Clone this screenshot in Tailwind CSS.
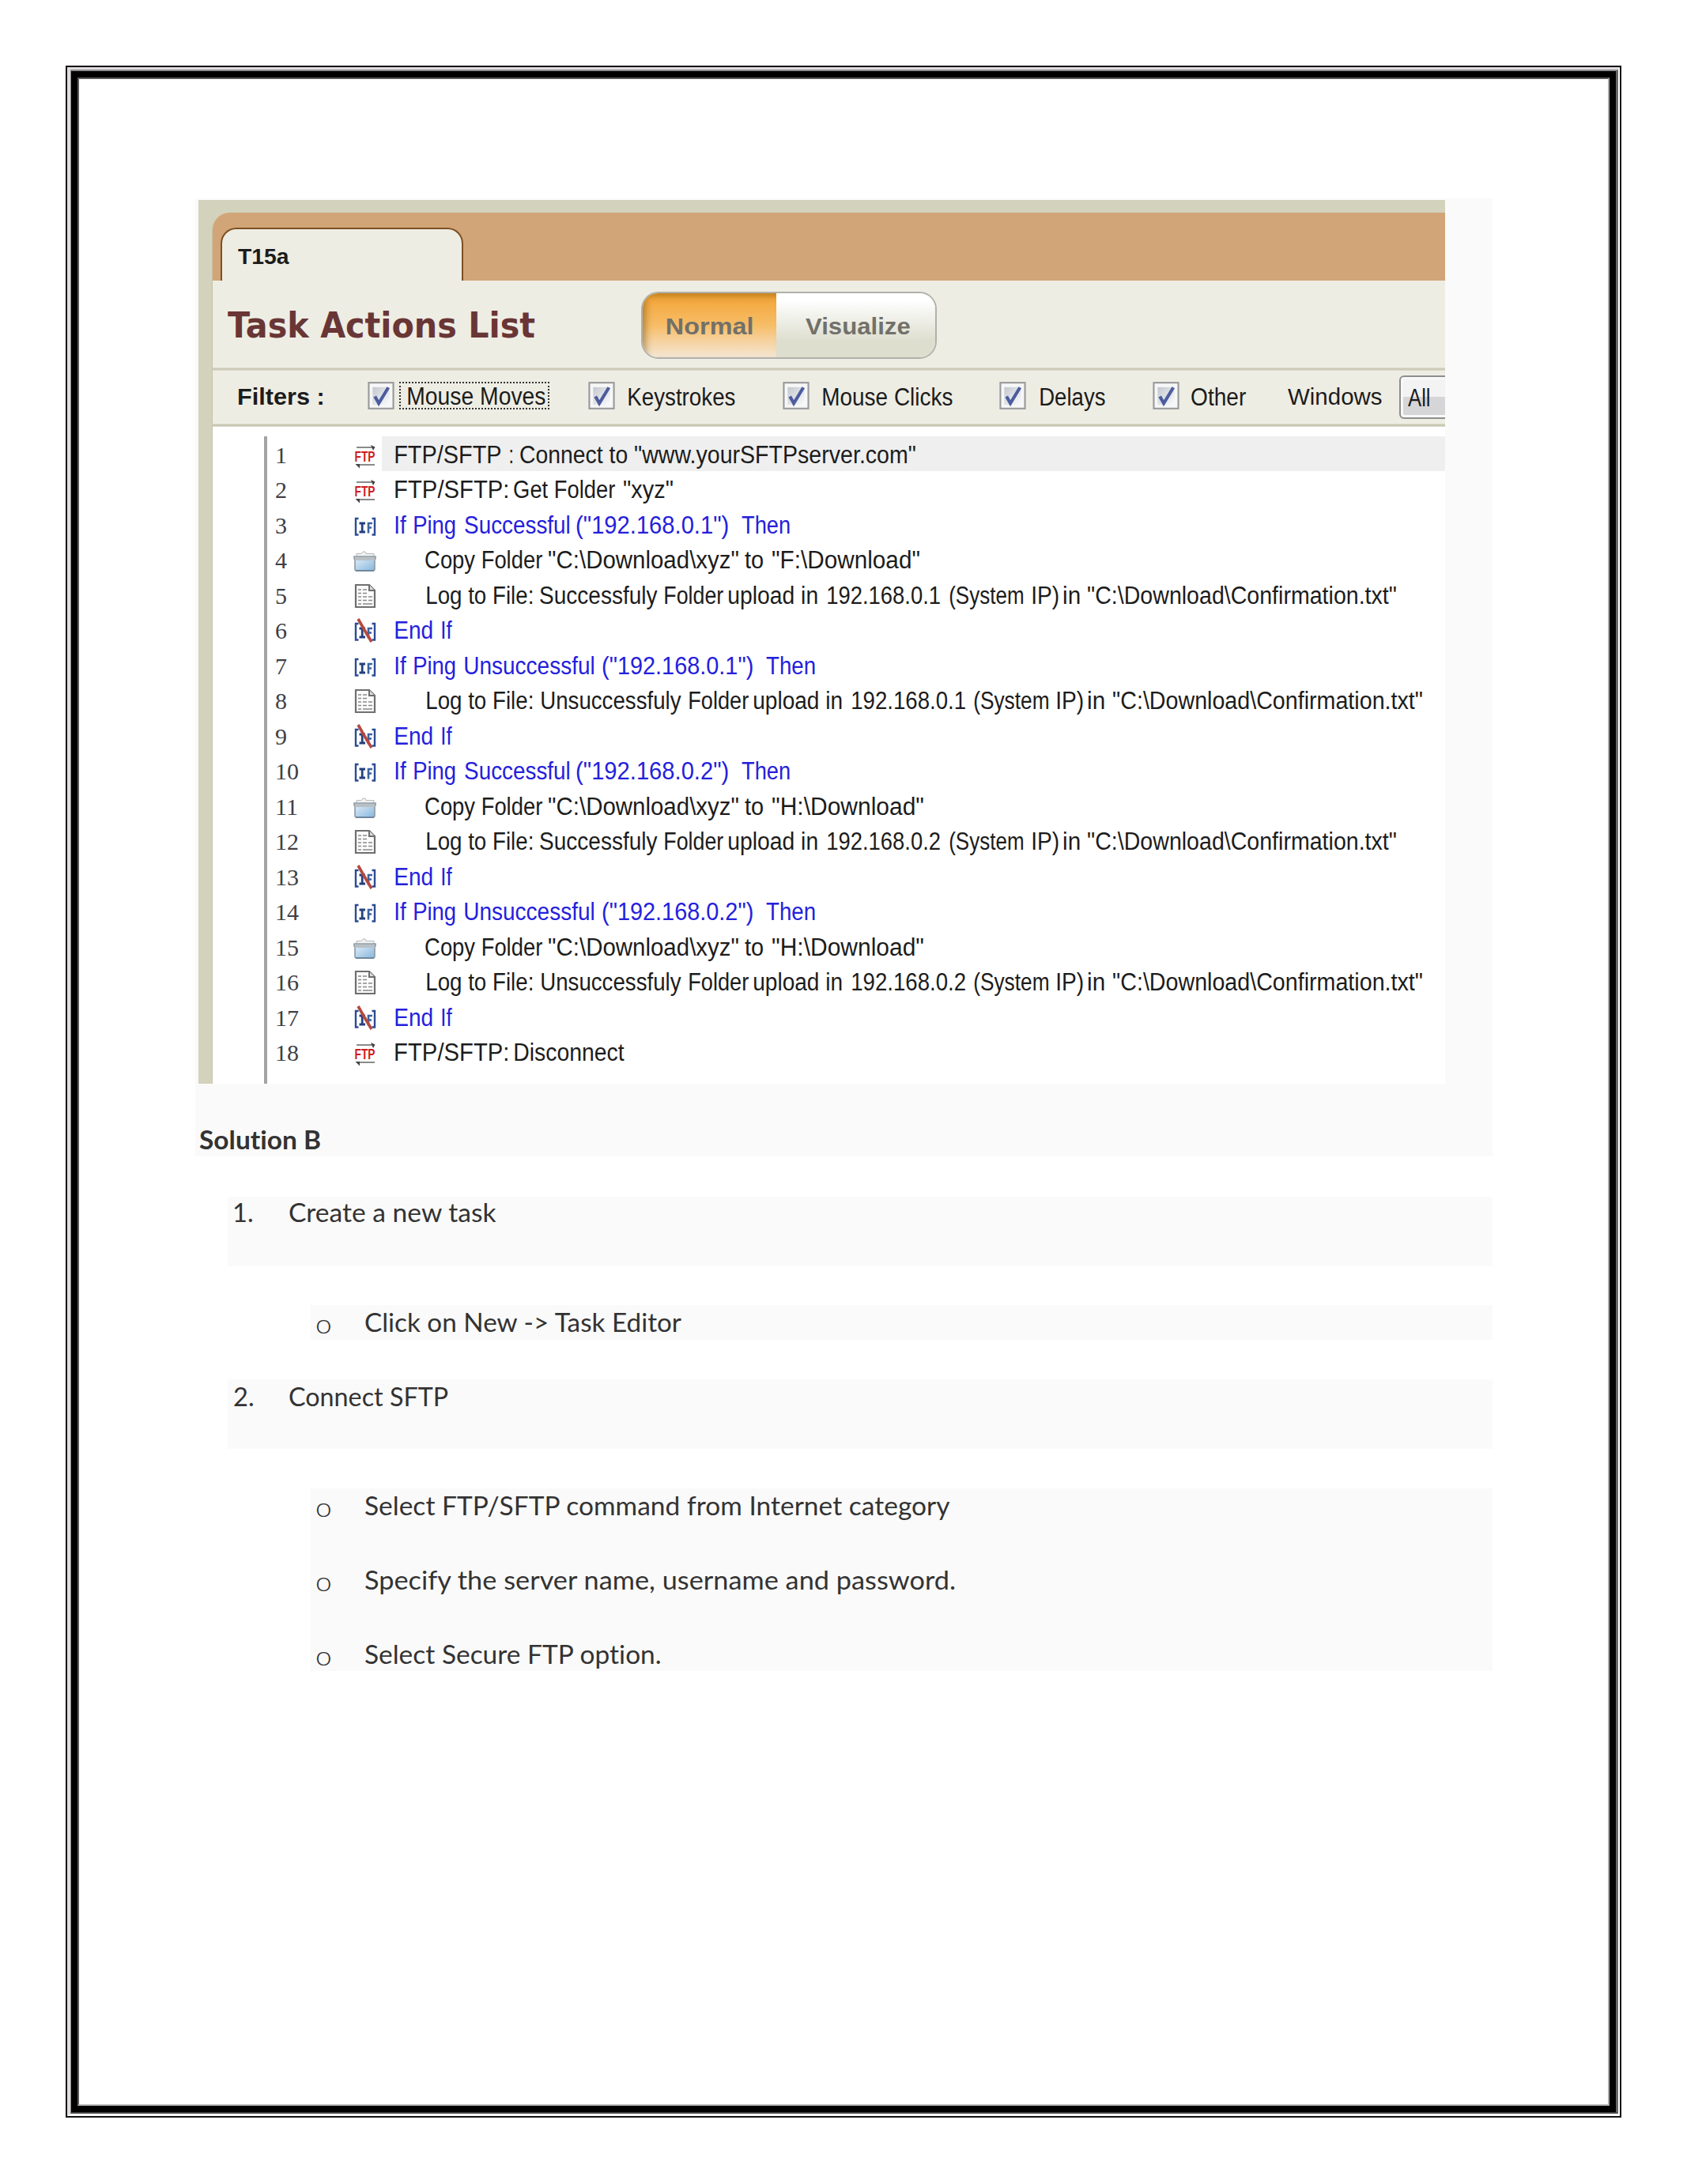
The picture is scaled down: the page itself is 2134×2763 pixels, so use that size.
<!DOCTYPE html>
<html lang="en">
<head>
<meta charset="utf-8">
<title>Solution B</title>
<script src="https://cdn.jsdelivr.net/npm/@tailwindcss/browser@4"></script>
</head>
<body class="bg-white">
<svg class="absolute size-0">
  <defs>
    <linearGradient id="g-folder" x1="0" y1="0" x2="1" y2="1"><stop offset="0" stop-color="#e6f3fb"/><stop offset="1" stop-color="#86b4dc"/></linearGradient>
    <linearGradient id="g-check" x1="0" y1="0" x2="1" y2="1"><stop offset="0" stop-color="#c3c8cf"/><stop offset="1" stop-color="#fafbfd"/></linearGradient>
  </defs>
</svg>

<!-- page frame -->
<div class="pt-[83px] pl-[83px]">
<div class="h-[2596px] w-[1968px] border-2 border-[#141214]">
<div class="h-full border-t-3 border-r-2 border-b-3 border-l-4 border-t-[#e0dcdf] border-r-white border-b-white border-l-[#e0dcdf]">
<div class="h-full border-t-2 border-r-3 border-b-2 border-l border-t-[#8d8a8c] border-r-[#666] border-b-[#444] border-l-[#8d8a8c]">
<div class="h-full border-8 border-black">
<div class="flex h-full flex-col border-2 border-t-[#5a5a5a] border-r-[#aaa] border-b-[#bbb] border-l-[#5a5a5a] bg-white font-['Lato',sans-serif] text-[32px] tracking-[0.01px] text-[#333]">

  <section class="mt-[151px] ml-[147px] h-[1212px] w-[1641px] shrink-0 bg-[#fafafa] pt-[2px] pl-[4px]">
    <div class="h-[1118px] w-[1577px] overflow-hidden bg-[#d3d2bd] pt-4 pl-[17px] font-['Liberation_Sans',sans-serif] text-[31px] text-[#1c1c1c]">
      <div class="flex h-full flex-col overflow-hidden rounded-tl-[22px] border-l border-[#c6c4a6] bg-[#eeede4]">
        <div class="flex h-[86px] shrink-0 bg-[#d1a577] pt-[19px] pl-[10px]">
          <div class="h-[67px] w-[307px] rounded-t-[20px] border-2 border-b-0 border-[#7d5022] bg-[#eeede4] pt-[13px] pl-[20px] text-[28px] leading-[44px] font-bold">
            <span data-w="65" class="block origin-left whitespace-nowrap">T15a</span>
          </div>
        </div>
        <div class="flex h-[110px] shrink-0 pl-[19px]">
          <h1 data-w="389" class="mt-[2px] block shrink-0 origin-left font-['DejaVu_Sans',sans-serif] text-[44px] leading-[110px] font-bold whitespace-nowrap text-[#693635]">Task Actions List</h1>
          <div class="mt-[14px] ml-[134px] flex h-[85px] w-[374px] shrink-0 overflow-hidden rounded-[22px] border-2 border-[#b1b1ab] text-[30px] leading-[83px] font-bold text-[#72706a]">
            <div class="flex w-[169px] shrink-0 bg-linear-to-b from-[#f2a22f] via-[#f7bd66] to-[#f3e6d2] pl-[31px] shadow-[inset_6px_5px_8px_-2px_rgba(120,80,10,0.5)]">
              <span data-w="108" class="block origin-left whitespace-nowrap">Normal</span>
            </div>
            <div class="flex flex-1 bg-linear-to-b from-white from-10% to-[#dddece] to-75% pl-[37px]">
              <span data-w="132" class="block origin-left whitespace-nowrap">Visualize</span>
            </div>
          </div>
        </div>
        <div class="h-1 shrink-0 border-y border-[#dad9c9] bg-[#cccbb9]"></div>
        <div class="flex h-[67px] shrink-0 leading-[67px]">
          <span data-w="107" class="ml-[32px] block shrink-0 origin-left text-[29px] font-bold whitespace-nowrap">Filters :</span>
          <svg data-icon="check" viewBox="0 0 34 36" class="mt-[14px] ml-[57px] h-[35px] w-[34px] shrink-0"></svg>
          <div class="mt-[14px] ml-[6px] flex h-[35px] w-[190px] shrink-0 border-2 border-dotted border-[#333] pl-[9px] leading-[34px]">
            <span data-w="174" class="block origin-left whitespace-nowrap">Mouse Moves</span>
          </div>
          <svg data-icon="check" viewBox="0 0 34 36" class="mt-[14px] ml-[49px] h-[35px] w-[34px] shrink-0"></svg>
          <span data-w="135" class="ml-[17px] block shrink-0 origin-left whitespace-nowrap">Keystrokes</span>
          <svg data-icon="check" viewBox="0 0 34 36" class="mt-[14px] ml-[60px] h-[35px] w-[34px] shrink-0"></svg>
          <span data-w="164" class="ml-[17px] block shrink-0 origin-left whitespace-nowrap">Mouse Clicks</span>
          <svg data-icon="check" viewBox="0 0 34 36" class="mt-[14px] ml-[59px] h-[35px] w-[34px] shrink-0"></svg>
          <span data-w="82" class="ml-[18px] block shrink-0 origin-left whitespace-nowrap">Delays</span>
          <svg data-icon="check" viewBox="0 0 34 36" class="mt-[14px] ml-[60px] h-[35px] w-[34px] shrink-0"></svg>
          <span data-w="69" class="ml-[15px] block shrink-0 origin-left whitespace-nowrap">Other</span>
          <span data-w="119" class="ml-[53px] block shrink-0 origin-left text-[29px] whitespace-nowrap">Windows</span>
          <div class="mt-[6px] ml-[22px] flex h-[55px] w-[90px] shrink-0 rounded-[6px] border-2 border-[#8e8e8e] bg-linear-to-b from-[#f3f3f3] from-50% to-[#d6d6d8] to-50% pl-[9px] leading-[54px] shadow-[inset_0_0_0_3px_#f8f8f8]">
            <span data-w="27" class="block origin-left whitespace-nowrap">All</span>
          </div>
        </div>
        <div class="h-1 shrink-0 border-y border-[#dad9c9] bg-[#c9c8b4]"></div>
        <div class="flex-1 bg-white pt-[12px] pl-[65px]">
          <div id="actions" class="h-full border-l-4 border-[#a3a3a3]"></div>
        </div>
      </div>
    </div>
    <h2 data-w="153" class="mt-[49px] ml-[1px] block origin-left leading-[44px] font-bold whitespace-nowrap">Solution B</h2>
  </section>

  <div class="mt-[51px] ml-[188px] flex h-[88px] w-[1600px] shrink-0 bg-[#fafafa] pl-[8px] leading-[39px]">
    <span data-w="23" class="block shrink-0 origin-left">1.</span>
    <span data-w="263" class="ml-[47px] block origin-left whitespace-nowrap">Create a new task</span>
  </div>

  <div class="mt-[49px] ml-[293px] flex h-[44px] w-[1495px] shrink-0 bg-[#fafafa] pl-[7px] leading-[44px]">
    <span data-w="18" class="block shrink-0 origin-left text-[33px] leading-[46px] font-light">o</span>
    <span data-w="402" class="ml-[44px] block origin-left whitespace-nowrap">Click on New -&gt; Task Editor</span>
  </div>

  <div class="mt-[50px] ml-[188px] flex h-[88px] w-[1600px] shrink-0 bg-[#fafafa] pl-[8px] leading-[44px]">
    <span data-w="24" class="block shrink-0 origin-left">2.</span>
    <span data-w="201" class="ml-[46px] block origin-left whitespace-nowrap">Connect SFTP</span>
  </div>

  <div class="mt-[50px] ml-[293px] flex h-[231px] w-[1495px] shrink-0 flex-col gap-[48px] bg-[#fafafa] pl-[7px] leading-[44px]">
    <div class="flex h-[46px]">
      <span data-w="18" class="block shrink-0 origin-left text-[33px] leading-[46px] font-light">o</span>
      <span data-w="741" class="ml-[44px] block origin-left whitespace-nowrap">Select FTP/SFTP command from Internet category</span>
    </div>
    <div class="flex h-[46px]">
      <span data-w="18" class="block shrink-0 origin-left text-[33px] leading-[46px] font-light">o</span>
      <span data-w="747" class="ml-[44px] block origin-left whitespace-nowrap">Specify the server name, username and password.</span>
    </div>
    <div class="flex h-[46px]">
      <span data-w="18" class="block shrink-0 origin-left text-[33px] leading-[46px] font-light">o</span>
      <span data-w="374" class="ml-[44px] block origin-left whitespace-nowrap">Select Secure FTP option.</span>
    </div>
  </div>

</div></div></div></div></div></div>

<script>
  const ifMark = `<path d="M6.500 7H3v20.500h3.500M23.500 7H27v20.500h-3.500" fill="none" stroke="#2c4b94" stroke-width="2.400"/>
    <path d="M7.500 13h7.500M11.200 13v11M7.500 24h7.500" fill="none" stroke="#23407f" stroke-width="2.800"/>
    <path d="M19 25.500V13h5M19 18.500h4" fill="none" stroke="#3c62a0" stroke-width="2.600"/>`;
  const icons = {
    ftp: `<path d="M4 6H24" stroke="#8a8a8a" stroke-width="2"/><path d="M22 3l5.500 2.500L25 10z" fill="#444"/>
      <text x="1.500" y="23.500" font-family="Liberation Sans" font-weight="700" font-size="18" textLength="26" lengthAdjust="spacingAndGlyphs" fill="#cf1c1c">FTP</text>
      <path d="M4 28H27" stroke="#8a8a8a" stroke-width="2"/><path d="M2.500 27h5.500v5.500z" fill="#444"/>`,
    if: ifMark,
    endif: ifMark + `<path d="M6 1l8 14 9 15" fill="none" stroke="#b5493f" stroke-width="3.600"/>`,
    folder: `<path d="M4 12V7.500h6l2-2.500h3l1 2.500h10V12" fill="#f0f1f1" stroke="#b5b8ba" stroke-width="1"/>
      <path d="M1 11h27v3l-1 1v12q0 2-2 2H4q-2 0-2-2V15l-1-1z" fill="url(#g-folder)" stroke="#8f9aa3" stroke-width="1.600"/>
      <path d="M2 12h25v4H2z" fill="#b9c0c5"/><path d="M3 29h23" stroke="#6e879d" stroke-width="2"/>`,
    file: `<path d="M3 2h17l7 7v21H3z" fill="#fbfbfb" stroke="#6f6f6f" stroke-width="2.200"/>
      <path d="M20 2v7h7" fill="#ddd" stroke="#6f6f6f" stroke-width="2"/>
      <path d="M6 8h4m2 0h5M6 12.500h4m2 0h5M6 17h4m2 0h5m2 0h5M6 21.500h4m2 0h5m2 0h5M6 26h4m2 0h12" stroke="#8a8a8a" stroke-width="1.500"/>`,
    check: `<rect x="1" y="1.200" width="32" height="33.600" fill="#f7f7f7" stroke="#999a9b" stroke-width="2.200"/>
      <rect x="6" y="7" width="22" height="23" fill="url(#g-check)"/>
      <path d="M9 19l5 9L26.500 7.500" fill="none" stroke="#4c5c9e" stroke-width="4.200"/>`,
  };
  document.querySelectorAll('[data-icon]').forEach(el => { el.innerHTML = icons[el.dataset.icon]; });

  // Each action: icon followed by its words as [text, start, end], measured from the page's left edge.
  const ifPing = ip => ['if', ['If', 500, 514], ['Ping', 524, 576], ['Successful', 588, 720], [`("${ip}")`, 729, 921], ['Then', 938, 999]];
  const ifNoPing = ip => ['if', ['If', 500, 514], ['Ping', 524, 576], ['Unsuccessful', 588, 751], [`("${ip}")`, 762, 952], ['Then', 969, 1031]];
  const endIf = ['endif', ['End', 500, 547], ['If', 559, 572]];
  const copy = (drive, end) => ['folder', ['Copy Folder', 538, 686], ['"C:\\Download\\xyz"', 694, 934], ['to', 942, 965], [`"${drive}:\\Download"`, 977, end]];
  const logOk = ip => ['file', ['Log to File:', 540, 673], ['Successfuly', 683, 832], ['Folder', 841, 915], ['upload in', 922, 1034], [ip, 1047, 1189], ['(System', 1201, 1294], ['IP)', 1306, 1339], ['in', 1346, 1366], ['"C:\\Download\\Confirmation.txt"', 1376, 1766]];
  const logBad = ip => ['file', ['Log to File:', 540, 673], ['Unsuccessfuly', 685, 862], ['Folder', 872, 947], ['upload in', 954, 1065], [ip, 1078, 1221], ['(System', 1232, 1326], ['IP)', 1337, 1370], ['in', 1377, 1397], ['"C:\\Download\\Confirmation.txt"', 1408, 1799]];
  const a = '192.168.0.1', b = '192.168.0.2';
  const actions = [
    ['ftp', ['FTP/SFTP', 500, 634], [':', 645, 648], ['Connect to', 658, 793], ['"www.yourSFTPserver.com"', 803, 1158]],
    ['ftp', ['FTP/SFTP:', 500, 642], ['Get Folder', 650, 778], ['"xyz"', 789, 851]],
    ifPing(a), copy('F', 1163), logOk(a), endIf,
    ifNoPing(a), logBad(a), endIf,
    ifPing(b), copy('H', 1168), logOk(b), endIf,
    ifNoPing(b), copy('H', 1168), logBad(b), endIf,
    ['ftp', ['FTP/SFTP:', 500, 642], ['Disconnect', 651, 790]],
  ];
  document.getElementById('actions').innerHTML = actions.map(([icon, ...words], i) => {
    const tone = icon === 'if' || icon === 'endif' ? 'text-[#2420dc]' : '';
    let x = 483;
    const text = words.map(([t, from, to]) => {
      const gap = from - x;
      x = to;
      return `<span data-w="${to - from}" class="block shrink-0 origin-left whitespace-nowrap" style="margin-left:${gap}px">${t}</span>`;
    }).join('');
    return `<div class="flex h-[44.47px] leading-[47px]">
      <span class="w-[109px] shrink-0 pl-[10px] font-['Liberation_Serif',serif] text-[30px] text-[#3d4045]">${i + 1}</span>
      <svg viewBox="0 0 30 34" class="mt-[8px] h-[34px] w-[30px] shrink-0">${icons[icon]}</svg>
      <div class="ml-[6px] flex flex-1 ${tone} ${i === 0 ? 'bg-[#efefef]' : ''}">${text}</div>
    </div>`;
  }).join('');

  // Squeeze or stretch each run of text so that its ink fills its column.
  const ctx = document.createElement('canvas').getContext('2d');
  const fit = () => document.querySelectorAll('[data-w]').forEach(el => {
    const s = getComputedStyle(el), w = +el.dataset.w;
    ctx.font = `${s.fontWeight} ${s.fontSize} ${s.fontFamily}`;
    ctx.letterSpacing = '0.01px';
    const m = ctx.measureText(el.textContent);
    const r = w / (m.actualBoundingBoxRight + m.actualBoundingBoxLeft);
    el.style.width = w + 'px';
    el.style.transform = `translateX(${m.actualBoundingBoxLeft * r}px) scaleX(${r})`;
  });
  fit();
  window.addEventListener('load', fit);
  new ResizeObserver(fit).observe(document.body);
</script>
</body>
</html>
